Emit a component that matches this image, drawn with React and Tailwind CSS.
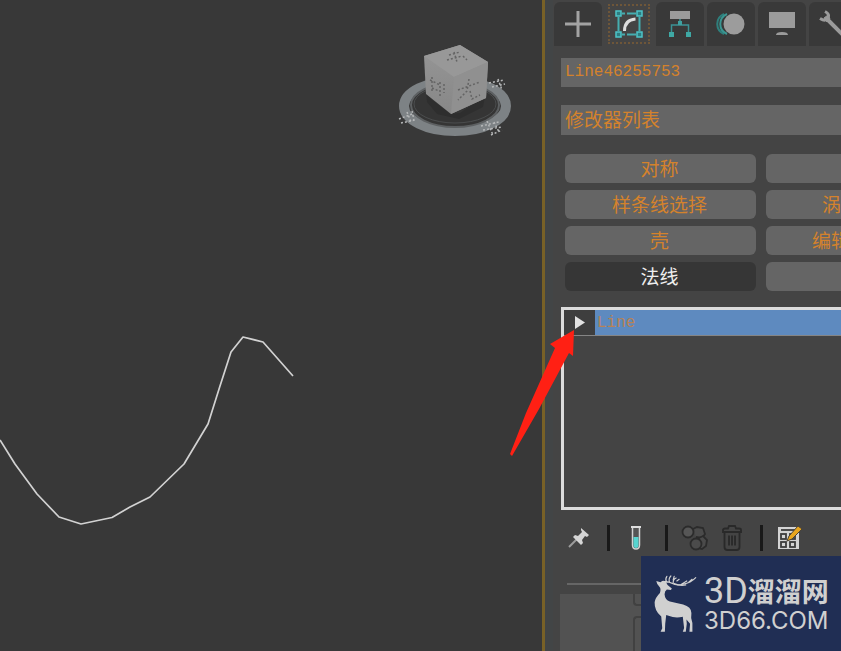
const modifierButtons = [
  { label: "对称" },
  { label: "", name: "空按钮 1" },
  { label: "样条线选择" },
  { label: "涡", inset: "pl-[56px]" },
  { label: "壳" },
  { label: "编辑", inset: "pl-[46px]" },
  { label: "法线", active: true },
  { label: "", name: "空按钮 2" },
];

function CreateIcon() {
  return (
    <svg width="28" height="28" viewBox="0 0 28 28" stroke="#a3a3a3" strokeWidth="3">
      <path d="M14 1v26M1 14h26" />
    </svg>
  );
}

function ModifyIcon() {
  return (
    <svg width="28" height="28" viewBox="0 0 28 28" fill="none">
      <path d="M7 3.500h3M12 3.500h9M7 24.500h3M12 24.500h9M3.500 7v14M24.500 7v14" stroke="#45adb0" strokeWidth="2" />
      <g fill="#2e7c80" stroke="#4cc4c8" strokeWidth="1.500">
        <rect x="1" y="1" width="5" height="5" />
        <rect x="22" y="1" width="5" height="5" />
        <rect x="1" y="22" width="5" height="5" />
        <rect x="22" y="22" width="5" height="5" />
      </g>
      <path d="M9.500 21C9.500 13 13 9.500 20.500 9" stroke="#dedede" strokeWidth="3" />
    </svg>
  );
}

function HierarchyIcon() {
  return (
    <svg width="24" height="28" viewBox="0 0 24 28" fill="none">
      <rect x="2" y="1" width="20" height="8" fill="#9b9b9b" />
      <path d="M12 9v6M3.500 22v-7h17v7" stroke="#3b9295" strokeWidth="1.500" />
      <rect x="10" y="11" width="4" height="4" fill="#3fa0a0" />
      <rect x="1" y="22" width="5" height="5" fill="#3fa9a5" />
      <rect x="18" y="22" width="5" height="5" fill="#3fa9a5" />
    </svg>
  );
}

function MotionIcon() {
  return (
    <svg width="30" height="24" viewBox="0 0 30 24" fill="none">
      <path d="M8 2C-1 6-1 18 8 22" stroke="#2f7f7c" strokeWidth="2" />
      <path d="M11 2C2 6 2 18 11 22" stroke="#3a9692" strokeWidth="2" />
      <circle cx="18" cy="12" r="10.500" fill="#9c9c9c" />
    </svg>
  );
}

function DisplayIcon() {
  return (
    <svg width="28" height="26" viewBox="0 0 28 26" fill="#9b9b9b">
      <path d="M1 1h26v16H1zM8 24q0-3 6-3t6 3z" />
    </svg>
  );
}

function WrenchIcon() {
  return (
    <svg width="30" height="30" viewBox="0 0 30 30" fill="none" stroke="#9b9b9b">
      <path d="M10 10L27 27" strokeWidth="4" />
      <path d="M8 2.500Q13 5 11 9T3 9.500" strokeWidth="3" />
      <path d="M7 9l4-3 2 4-3 3z" fill="#9b9b9b" />
    </svg>
  );
}

const tabs = [
  { name: "创建", Icon: CreateIcon },
  { name: "修改", Icon: ModifyIcon, active: true },
  { name: "层次", Icon: HierarchyIcon },
  { name: "运动", Icon: MotionIcon },
  { name: "显示", Icon: DisplayIcon },
];

function ViewCube() {
  return (
    <svg
      className="absolute top-[36px] right-[22px]"
      width="130"
      height="106"
      viewBox="390 36 130 106"
      fill="none"
    >
      <defs>
        <linearGradient id="cubeSide" x1="0" y1="0" x2="0" y2="1">
          <stop offset="0" stopColor="#969696" />
          <stop offset="1" stopColor="#878787" />
        </linearGradient>
      </defs>
      <ellipse cx="455" cy="106" rx="51" ry="25" stroke="#7d8285" strokeWidth="10" />
      <ellipse cx="455" cy="105" rx="44" ry="22" fill="#353535" stroke="#5d6062" strokeWidth="2" />
      <ellipse cx="455" cy="104" rx="41" ry="19" stroke="#4b4d4e" />
      <path d="M426 92l5 7 20 15 9-1 25-17-2 11-24 12-22-5-10-12z" fill="#2e2e2e" />
      <path d="M424 56L460 45 488 62 486 98 451 114 426 94z" fill="url(#cubeSide)" />
      <path d="M424 56L460 45 488 62 454 77z" fill="#989898" />
      <path d="M454 77L488 62 486 98 451 114z" fill="#909090" />
      <g stroke="#646464" strokeWidth="1.500" strokeDasharray="2 2">
        <path d="M449 55l11-3M447 60l15-4M454 52l3 10M463 56l4 4" />
        <path d="M430 80l10 5M432 77v16M440 82v14M432 88l7 3M444 84v9" />
        <path d="M458 90l22-8M469 79l-2 12-9 9M470 91l2 8 8-4" />
      </g>
      <g stroke="#b6b8b9" strokeWidth="1.500" strokeDasharray="2 2">
        <path d="M399 119l13-5M401 123l14-3M407 112l4 10M412 111l2 9M489 83l15-3M492 87l13-3M498 79l4 11" />
        <path d="M481 126l18-4M483 130l19-3M487 121l6 14M494 122l5 10M491 135l11-5" />
      </g>
    </svg>
  );
}

function Viewport() {
  return (
    <main className="relative min-w-0 flex-1 overflow-hidden bg-[#383838]">
      <ViewCube />
      <svg
        className="absolute top-[330px] left-0"
        width="300"
        height="200"
        viewBox="0 330 300 200"
        fill="none"
      >
        <path
          d="M0 440L15 464 37 494 59 517 81 524 112 517.500 130 507 150 497 184 464 208 424 220 386 231 352 243 337 263 342 293 376"
          stroke="#d2d2d2"
          strokeWidth="1.700"
          strokeLinejoin="round"
        />
      </svg>
    </main>
  );
}

function TabBar() {
  return (
    <nav className="flex h-11 gap-[3px] overflow-hidden" aria-label="命令面板">
      {tabs.map(({ name, Icon, active }) => (
        <button
          key={name}
          type="button"
          aria-label={name}
          className={
            active
              ? "flex w-12 shrink-0 items-center justify-center bg-[#444444] p-[2px]"
              : "flex w-12 shrink-0 items-center justify-center rounded-t-md bg-[#393939]"
          }
        >
          {active ? (
            <span className="flex h-10 w-[42px] items-center justify-center border-2 border-dotted border-[#6e5639]">
              <Icon />
            </span>
          ) : (
            <Icon />
          )}
        </button>
      ))}
      <button
        type="button"
        aria-label="实用程序"
        className="flex min-w-0 flex-1 items-center overflow-hidden rounded-tl-md bg-[#393939] pl-2"
      >
        <span className="shrink-0">
          <WrenchIcon />
        </span>
      </button>
    </nav>
  );
}

function ModifierButton({ button, clipped }) {
  const tone = button.active ? "bg-[#363636] text-[#eeeeee]" : "bg-[#656565] text-[#d4822c]";
  const shape = clipped ? "rounded-l-md text-left" : "rounded-md pr-[2px] text-center";

  return (
    <button
      type="button"
      aria-label={button.label || button.name}
      className={`h-[29px] overflow-hidden pb-[2px] text-[19px] leading-[27px] whitespace-nowrap ${tone} ${shape} ${button.inset || ""}`}
    >
      {button.label}
    </button>
  );
}

function ModifierStack() {
  return (
    <div className="ml-[7px] h-[203px] border-y-3 border-l-3 border-[#dcdcdc] bg-[#444444]">
      <div className="flex h-[26px] border-b border-[#858585]">
        <button
          type="button"
          aria-label="展开"
          className="flex w-[31px] items-center justify-center bg-[#3e3e3e]"
        >
          <svg width="10" height="13" viewBox="0 0 10 13" fill="#e2e2e2">
            <path d="M0 0L10 6.500 0 13z" />
          </svg>
        </button>
        <span className="flex-1 bg-[#5e8abf] pl-[2px] font-['Liberation_Mono',monospace] text-[16px] leading-[26px] text-[#b88255]">
          Line
        </span>
      </div>
    </div>
  );
}

function Separator() {
  return <span className="h-[26px] w-[3px] bg-[#191919]" />;
}

function StackToolbar() {
  return (
    <div className="flex h-[56px] items-center pl-[14px]">
      <button type="button" aria-label="锁定堆栈">
        <svg width="22" height="22" viewBox="0 0 22 22" fill="#d6d6d6">
          <path d="M1 20L9 12" stroke="#9d9d9d" strokeWidth="2" />
          <path d="M13 1l8 7-2 2-2-1-3 4 1 3-2 2-8-8 2-2 3 1 4-4-1-2z" />
        </svg>
      </button>
      <span className="w-[17px]" />
      <Separator />
      <span className="w-5" />
      <button type="button" aria-label="显示最终结果">
        <svg width="12" height="26" viewBox="0 0 12 26" fill="none">
          <path d="M2.500 2v18q0 4 3.500 4t3.500-4V2" fill="#555555" stroke="#d3d3d3" strokeWidth="1.500" />
          <path d="M1 2h10" stroke="#dedede" strokeWidth="2" />
          <path d="M3.500 12h5v8q0 3-2.500 3t-2.500-3z" fill="#57d4cf" />
        </svg>
      </button>
      <span className="w-[23px]" />
      <Separator />
      <span className="w-[13px]" />
      <button type="button" aria-label="使唯一">
        <svg width="28" height="28" viewBox="0 0 28 28" fill="#4b4b4b" stroke="#2b2b2b" strokeWidth="1.800">
          <path d="M12 5l4-2 6 1 2 6-3 4-6-1" />
          <circle cx="7" cy="8" r="5.500" fill="#565656" />
          <path d="M18 14l4-2 4 4-1 6-4 3-4-1z" />
          <circle cx="15" cy="20" r="5.500" />
        </svg>
      </button>
      <span className="w-[13px]" />
      <button type="button" aria-label="移除修改器">
        <svg width="20" height="26" viewBox="0 0 20 26" fill="none" stroke="#292929" strokeWidth="1.800">
          <path d="M1 7V5q0-1.500 2-1.500h3L7 1h6l1 2.500h3q2 0 2 1.500v2zM2.500 7v15q0 3 3 3h9q3 0 3-3V7M7 10.500v10M10 10.500v10M13 10.500v10" />
        </svg>
      </button>
      <span className="w-[18px]" />
      <Separator />
      <span className="w-[14px]" />
      <button type="button" aria-label="配置修改器集">
        <svg width="26" height="26" viewBox="0 0 26 26" fill="none">
          <path d="M1 2h21v22H1z" fill="#d4d4d4" />
          <path d="M4 5h14" stroke="#4b4b4b" strokeWidth="2" />
          <g fill="#d4d4d4" stroke="#3c3c3c" strokeWidth="1.800">
            <rect x="4" y="9" width="5" height="5" />
            <rect x="13" y="9" width="5" height="5" />
            <rect x="4" y="17" width="5" height="5" />
            <rect x="13" y="17" width="5" height="5" />
          </g>
          <path d="M10 16l2-5L21 1l4 3-10 10z" fill="#e7a51e" stroke="#4b4335" />
        </svg>
      </button>
    </div>
  );
}

function CommandPanel() {
  return (
    <aside className="relative flex w-[299px] shrink-0 flex-col border-l-3 border-[#786127] bg-[#444444] pt-[2px] pl-[9px] shadow-[inset_8px_0_0_#424546]">
      <TabBar />

      <div className="mt-3 ml-[7px] flex flex-col gap-[18px]">
        <input
          aria-label="对象名称"
          defaultValue="Line46255753"
          className="h-[29px] w-full rounded-none bg-[#656565] px-1 pb-[2px] font-['Liberation_Mono',monospace] text-[16px] text-[#d4822c] outline-none"
        />
        <select
          aria-label="修改器列表"
          className="h-[30px] w-full appearance-none rounded-none bg-[#656565] px-1 pb-[2px] text-[19px] leading-[28px] text-[#d4822c] outline-none"
        >
          <option>修改器列表</option>
        </select>
      </div>

      <div className="mt-[19px] ml-[11px] grid grid-cols-[191px_1fr] gap-x-[10px] gap-y-[7px]">
        {modifierButtons.map((button, index) => (
          <ModifierButton
            key={button.label || button.name}
            button={button}
            clipped={index % 2 === 1}
          />
        ))}
      </div>

      <div className="mt-4">
        <ModifierStack />
      </div>
      <StackToolbar />

      <div className="mt-[17px] ml-[13px] h-[2px] bg-[#666666]" />
      <div className="mt-[9px] ml-[6px] flex min-h-[56px] flex-1 flex-col gap-[10px] bg-[#525252] pl-[73px]">
        <div className="h-3 rounded-bl border-b-2 border-l-2 border-[#414141]" />
        <div className="flex-1 rounded-tl border-t-2 border-l-2 border-[#414141]" />
      </div>

      <svg
        className="absolute top-[328px] -left-[36px]"
        width="70"
        height="130"
        viewBox="509 328 70 130"
        fill="#ff2014"
      >
        <path d="M574 330L550 344 555 348 526 413 510 454 512 456 539 409 569 353 573 356z" />
      </svg>
    </aside>
  );
}

function Deer() {
  return (
    <svg width="45" height="59" viewBox="38 54 134 178" fill="#d0d0d0">
      <path d="M47 75L60 79Q67 72 75 76L81 87 94 98 91 102 79 101Q72 106 72 115 73 132 88 137L128 146Q153 153 153 172 150 188 156 202L156 228H147L149 204 138 191 139 204 136 228H127L131 217 129 200 127 183Q105 189 84 180L77 178 74 204 73 228H60L65 218 62 182Q41 165 42 139 44 125 58 111 62 99 57 93 49 87 47 75z" />
      <g fill="none" stroke="#d0d0d0" strokeWidth="3.500" strokeLinecap="round">
        <path d="M70 77Q85 76 96 83T128 85Q151 81 166 65M78 79Q73 69 79 61M87 79Q83 68 91 60M98 83Q97 69 107 66M109 75l7-5M123 85l16-10M145 79l10-9M98 72l3-11" />
        <path d="M101 83Q119 91 136 87" />
      </g>
    </svg>
  );
}

function Watermark() {
  return (
    <div className="absolute right-0 bottom-0 flex h-[95px] w-[200px] items-center gap-[6px] overflow-hidden bg-[#202e54] pl-3 text-[#d0d0d0]">
      <Deer />
      <div className="flex flex-col gap-[2px] whitespace-nowrap">
        <p className="flex h-8 items-center">
          <span className="font-['Roboto',sans-serif] text-[36px] leading-8">3D</span>
          <span className="text-[27px] leading-7 font-bold">溜溜网</span>
        </p>
        <p className="font-['Inter',sans-serif] text-[24px] leading-6">3D66.COM</p>
      </div>
    </div>
  );
}

export default function App() {
  return (
    <div className="relative flex min-h-screen overflow-hidden bg-[#383838] font-['Noto_Sans_CJK_SC',sans-serif]">
      <Viewport />
      <CommandPanel />
      <Watermark />
    </div>
  );
}
